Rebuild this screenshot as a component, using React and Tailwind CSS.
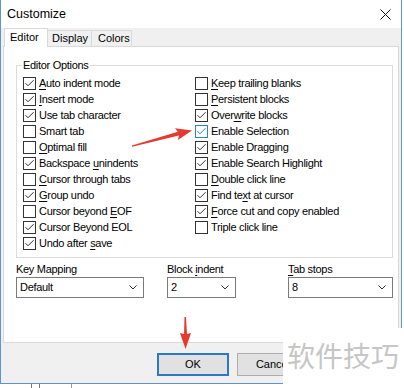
import React from "react";

const LEFT = [
  { label: "&Auto indent mode", checked: true },
  { label: "&Insert mode", checked: true },
  { label: "Use tab character", checked: true },
  { label: "Smart tab", checked: false },
  { label: "&Optimal fill", checked: false },
  { label: "Backspace &unindents", checked: true },
  { label: "&Cursor through tabs", checked: false },
  { label: "&Group undo", checked: true },
  { label: "Cursor beyond &EOF", checked: false },
  { label: "Cursor Beyond EOL", checked: true },
  { label: "Undo after &save", checked: true },
];

const RIGHT = [
  { label: "&Keep trailing blanks", checked: false },
  { label: "&Persistent blocks", checked: false },
  { label: "Over&write blocks", checked: true },
  { label: "Enable Selection", checked: true, focus: true },
  { label: "Enable Dragging", checked: true },
  { label: "Enable Search Highlight", checked: true },
  { label: "&Double click line", checked: false },
  { label: "Find te&xt at cursor", checked: true },
  { label: "&Force cut and copy enabled", checked: true },
  { label: "Triple click line", checked: false },
];

// "&" marks the access key, drawn underlined like a Win32 dialog
function AccessLabel({ text }) {
  const i = text.indexOf("&");
  if (i < 0) return <span>{text}</span>;
  return (
    <span>
      {text.slice(0, i)}
      <span className="underline underline-offset-[2px]">{text[i + 1]}</span>
      {text.slice(i + 2)}
    </span>
  );
}

function CheckBox({ label, checked, focus }) {
  return (
    <div className="h-[16px] flex items-center gap-[3px]">
      <span
        className={`w-[13px] h-[13px] border bg-white shrink-0 flex items-center justify-center ${
          focus ? "border-[#2c7fd0]" : "border-[#333333]"
        }`}
      >
        {checked && (
          <svg width="11" height="11" viewBox="0 0 11 11">
            <path
              d="M1.5 5.2 L4 7.8 L9.6 2.2"
              fill="none"
              stroke={focus ? "#2c7fd0" : "#333333"}
              strokeWidth="1"
            />
          </svg>
        )}
      </span>
      <AccessLabel text={label} />
    </div>
  );
}

function Select({ label, value, width }) {
  return (
    <div className="flex flex-col">
      <div className="h-[14px] leading-[14px] mb-[1px]">
        <AccessLabel text={label} />
      </div>
      <div
        className="h-[21px] border border-[#7a7a7a] bg-white flex items-center justify-between pl-[3px] pr-[6px]"
        style={{ width }}
      >
        <span>{value}</span>
        <svg width="8" height="5" viewBox="0 0 8 5">
          <path d="M0.5 0.5 L4 4 L7.5 0.5" fill="none" stroke="#333" strokeWidth="1" />
        </svg>
      </div>
    </div>
  );
}

export default function App() {
  return (
    <div className="w-[404px] h-[388px] bg-white relative overflow-hidden font-['Liberation_Sans',Arial,sans-serif] text-[11px] text-black tracking-[-0.3px]">
      <div className="w-[402px] h-[384px] border-x border-b border-[#5f95cc] flex flex-col">
        {/* title bar */}
        <div className="h-[28px] bg-white flex items-center justify-between pl-[6px] pr-[10px]">
          <span className="text-[12.5px] tracking-normal">Customize</span>
          <svg width="11" height="11" viewBox="0 0 11 11">
            <path d="M0.5 0.5 L10.5 10.5 M10.5 0.5 L0.5 10.5" stroke="#111" strokeWidth="1" />
          </svg>
        </div>

        <div className="flex-1 bg-[#f0f0f0] flex flex-col pl-[2px] pr-[2px]">
          {/* tabs */}
          <div className="h-[18px] flex items-end pl-[1px] tracking-normal">
            <div className="relative z-10 -mb-px h-[19px] w-[44px] bg-white border-x border-t border-[#d9d9d9] pl-[5px] leading-[16px]">
              Editor
            </div>
            <div className="h-[16px] w-[44px] border-t border-r border-[#d9d9d9] pl-[4px] leading-[15px]">
              Display
            </div>
            <div className="h-[16px] w-[40px] border-t border-r border-[#d9d9d9] pl-[6px] leading-[15px]">
              Colors
            </div>
          </div>

          {/* tab page */}
          <div className="h-[297px] bg-white border border-[#d9d9d9] flex flex-col pl-[12px]">
            <div className="mt-[18px] w-[377px] border border-[#dcdcdc] pl-[6px] pb-[6px]">
              <div className="-mt-[8px] ml-[-1px] w-fit bg-white px-[1px] h-[14px] leading-[14px]">
                Editor Options
              </div>
              <div className="mt-[3px] grid grid-cols-[172px_1fr]">
                <div className="flex flex-col">
                  {LEFT.map((o) => (
                    <CheckBox key={o.label} {...o} />
                  ))}
                </div>
                <div className="flex flex-col">
                  {RIGHT.map((o) => (
                    <CheckBox key={o.label} {...o} />
                  ))}
                </div>
              </div>
            </div>

            <div className="mt-[4px] flex gap-[23px]">
              <Select label="Key Mapping" value="Default" width={128} />
              <div className="flex gap-[52px]">
                <Select label="Block &indent" value="2" width={69} />
                <Select label="&Tab stops" value="8" width={105} />
              </div>
            </div>
          </div>

          {/* buttons */}
          <div className="mt-[10px] pl-[154px] flex gap-[8px] tracking-normal">
            <button className="w-[72px] h-[23px] bg-[#e1e1e1] border-2 border-[#2b78c8] text-[11px]">
              OK
            </button>
            <button className="w-[72px] h-[23px] bg-[#e1e1e1] border border-[#adadad] text-[11px]">
              Cancel
            </button>
          </div>
        </div>
      </div>

      {/* strip of the window behind */}
      <div className="flex h-[4px]">
        <div className="w-[32px] border-r border-[#777]" />
        <div className="w-[8px] border-r border-[#777]" />
        <div className="w-[32px] border-r border-[#999]" />
      </div>

      {/* red annotation arrows */}
      <svg className="absolute left-0 top-0 pointer-events-none" width="404" height="388">
        <polygon
          points="131.9,145.5 177.9,131.7 175,128.3 192,130.5 178,139.9 178.9,135.5 132.1,146.8"
          fill="#e53a2f"
        />
        <polygon points="184.5,317 186,317 187,334 191,333 185.5,349 180,333 184,334" fill="#e53a2f" />
      </svg>

      {/* watermark */}
      <div className="absolute left-[283px] top-[328px] w-[121px] h-[60px] bg-white flex items-center pl-[4px] pb-[6px] font-['Noto_Sans_CJK_SC',sans-serif] text-[28px] tracking-normal text-[#c6c6c6]">
        软件技巧
      </div>
    </div>
  );
}
